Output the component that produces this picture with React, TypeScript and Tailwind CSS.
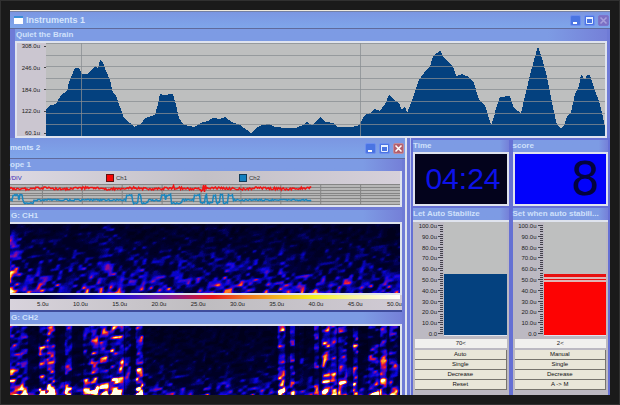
import type { ReactNode } from 'react';
import clsx from 'clsx';

type Point = [number, number];

const BRAIN: Point[] = [
  [46, 109], [51, 104], [56, 104], [61, 95], [67, 90], [69, 82], [72, 75], [75, 67], [79, 68], [82, 74],
  [87, 73], [92, 70], [95, 66], [98, 67], [100, 60], [103, 62], [106, 70], [110, 80], [113, 93], [116, 94],
  [120, 107], [124, 118], [130, 122], [134, 127], [141, 124], [145, 117], [155, 115], [158, 104], [160, 93],
  [163, 95], [173, 94], [176, 104], [179, 118], [184, 125], [194, 126], [203, 122], [208, 121], [213, 117],
  [220, 119], [225, 117], [232, 121], [240, 125], [247, 130], [251, 133], [256, 128], [262, 125], [269, 123],
  [275, 127], [286, 128], [296, 127], [303, 125], [307, 122], [312, 124], [321, 117], [325, 122], [334, 122],
  [337, 127], [350, 127], [358, 125], [362, 120], [365, 115], [370, 112], [375, 109], [380, 111], [385, 103],
  [389, 95], [393, 99], [399, 102], [402, 110], [405, 106], [407, 112], [413, 98], [419, 80], [426, 69],
  [430, 67], [433, 56], [437, 52], [440, 50], [444, 58], [449, 62], [453, 66], [456, 76], [462, 73],
  [469, 77], [474, 83], [479, 99], [485, 105], [488, 115], [491, 124], [494, 117], [496, 108], [500, 96],
  [510, 96], [514, 108], [521, 112], [526, 92], [530, 75], [534, 59], [538, 46], [541, 55], [546, 72],
  [550, 92], [553, 108], [557, 124], [561, 128], [564, 125], [567, 116], [571, 112], [575, 94], [579, 85],
  [581, 74], [585, 80], [587, 74], [590, 75], [594, 88], [599, 100], [602, 113], [605, 127],
];

const hash = (x: number, y: number, seed: number) => {
  const n = Math.sin(x * 127.1 + y * 311.7 + seed * 74.7) * 43758.5453;
  return n - Math.floor(n);
};

const smooth = (t: number) => t * t * (3 - 2 * t);

const noise = (x: number, y: number, seed: number) => {
  const xi = Math.floor(x);
  const yi = Math.floor(y);
  const fx = smooth(x - xi);
  const fy = smooth(y - yi);
  const top = hash(xi, yi, seed) * (1 - fx) + hash(xi + 1, yi, seed) * fx;
  const bottom = hash(xi, yi + 1, seed) * (1 - fx) + hash(xi + 1, yi + 1, seed) * fx;
  return top * (1 - fy) + bottom * fy;
};

const HEAT: [number, number, number, number][] = [
  [0, 0, 0, 28],
  [0.12, 0, 0, 60],
  [0.36, 10, 5, 225],
  [0.52, 110, 10, 170],
  [0.62, 235, 20, 50],
  [0.76, 250, 140, 30],
  [0.88, 255, 235, 90],
  [1, 255, 255, 235],
];

const LEVELS = 32;

const heatColor = (t: number) => {
  const i = Math.max(1, HEAT.findIndex((stop) => stop[0] >= t));
  const a = HEAT[i - 1];
  const b = HEAT[i];
  const f = (t - a[0]) / (b[0] - a[0]);
  const mix = (k: number) => Math.round(a[k] + (b[k] - a[k]) * f);
  return `rgb(${mix(1)},${mix(2)},${mix(3)})`;
};

// center, half width, strength over the full height, strength near the bottom
const BANDS: [number, number, number, number][] = [
  [4, 7, 0.36, 0.9], [13, 5, 0.27, 0.85], [32, 4, 0.4, 1], [40, 5, 0.43, 1.1], [58, 4, 0.3, 0.8],
  [77, 5, 0.31, 0.9], [84, 5, 0.4, 1.1], [94, 6, 0.38, 1.1], [104, 6, 0.45, 1.1], [110, 4, 0.42, 0.8],
  [117, 4, 0.24, 0.4], [129, 4, 0.48, 1], [272, 4, 0.48, 1.1], [283, 3, 0.26, 0.45], [292, 3, 0.17, 0.17],
  [307, 3, 0.26, 0.7], [317, 5, 0.45, 1.1], [324, 4, 0.32, 1.1], [333, 5, 0.38, 1.15], [346, 3, 0.4, 0.8],
  [364, 6, 0.27, 0.75], [374, 4, 0.4, 0.85], [384, 5, 0.26, 0.7],
];

const quietLevel = (x: number, y: number) => {
  const left = Math.max(0, 1 - x / 16) * 0.2;
  const faint = Math.exp(-(((x - 98) / 8) ** 2)) * 0.12;
  const depth = y * (x < 280 ? 0.2 : 0.17) + y ** 4 * 0.12;
  return 0.06 + left + faint * (1 - y) + depth;
};

const burstLevel = (x: number, y: number) => {
  let gain = 0;
  for (const [center, width, body, foot] of BANDS) {
    const shape = Math.exp(-(((x - center) / width) ** 4));
    gain = Math.max(gain, shape * (body * (0.9 + y * 0.3) + (foot * 1.1 - body) * y ** 7));
  }
  return Math.max(gain, 0.05 + y * 0.09 + y ** 6 * 0.24);
};

const spectrum = (width: number, height: number, seed: number, level: (x: number, y: number) => number) => {
  const paths: string[] = Array(LEVELS).fill('');
  for (let y = 0; y < height; y++) {
    let start = 0;
    let last = -1;
    for (let x = 0; x <= width; x++) {
      let q = -1;
      if (x < width) {
        const n = noise(x / 4.5 + y / 17, y / 3.2 + x / 23, seed) * 0.8 + noise(x / 8, y / 5, seed + 9) * 0.2;
        const v = level(x, y / height) * (0.2 + n * n * 2.5);
        q = Math.min(LEVELS - 1, Math.floor(v * LEVELS));
      }
      if (q !== last) {
        if (last >= 0) paths[last] += `M${start} ${y}h${x - start}v1h${start - x}z`;
        start = x;
        last = q;
      }
    }
  }
  return paths;
};

const CH1 = spectrum(391, 69, 3, quietLevel);
const CH2 = spectrum(391, 69, 17, burstLevel);

const redTrace = Array.from({ length: 303 }, (_, x) => {
  const burst = x > 162 && x < 167 ? 9 : x > 191 && x < 197 ? 9 : 2.4;
  return `${x},${(4.5 + (hash(x, 1, 5) - 0.5) * burst + Math.sin(x / 7) * 0.5).toFixed(1)}`;
}).join(' ');

const PULSES: [number, number][] = [
  [3, 8], [10, 12], [117, 122], [129, 131], [152, 155], [157, 161], [185, 190], [196, 197], [204, 206], [211, 213], [219, 223],
];

const blueTrace = Array.from({ length: 303 }, (_, x) => {
  const high = PULSES.some(([a, b]) => x >= a && x <= b);
  const low = (x > 13 && x < 24) || (x > 123 && x < 139) || (x > 161 && x < 173) || (x > 190 && x < 224);
  const base = high ? 11 : low ? 19 : 16;
  return `${x},${(base + (hash(x, 2, 8) - 0.5) * 1.6).toFixed(1)}`;
}).join(' ');

function Spectrogram({ paths, label }: { paths: string[]; label: string }) {
  return (
    <svg
      viewBox="0 0 391 69"
      preserveAspectRatio="none"
      shapeRendering="crispEdges"
      role="img"
      aria-label={label}
      className="block h-[69px] w-full bg-[#00001c]"
    >
      {paths.map((d, i) => (
        <path key={i} d={d} fill={heatColor(i / (LEVELS - 1))} />
      ))}
    </svg>
  );
}

function PanelTitle({ children, className }: { children: ReactNode; className?: string }) {
  return (
    <h2
      className={clsx(
        'h-3 whitespace-nowrap bg-linear-to-r from-[#7d9be4] from-90% to-[#7580d8] text-[8px] leading-3 font-bold text-[#cfe0fb]',
        className
      )}
    >
      {children}
    </h2>
  );
}

function WindowButtons({ disabled }: { disabled?: boolean }) {
  const base = 'flex size-[11px] items-center justify-center rounded-xs border';
  return (
    <div className="flex gap-[3px]">
      <button aria-label="Minimize" className={clsx(base, 'border-[#6c8df0] bg-[#4a74e2]')}>
        <svg viewBox="0 0 9 9" className="size-[9px] shrink-0">
          <path d="M2 6h4v2H2z" fill="#fff" />
        </svg>
      </button>
      <button aria-label="Maximize" className={clsx(base, 'border-[#6c8df0] bg-[#4a74e2]')}>
        <svg viewBox="0 0 9 9" className="size-[9px] shrink-0">
          <path d="M1.5 2h6v5.5h-6z" fill="none" stroke="#e8f0ff" />
          <path d="M1 1h7v2H1z" fill="#e8f0ff" />
        </svg>
      </button>
      <button
        aria-label="Close"
        disabled={disabled}
        className={clsx(base, disabled ? 'border-[#7d74cc] bg-[#7b70c4]' : 'border-[#c08a9c] bg-[#b35f6c]')}
      >
        <svg viewBox="0 0 9 9" className="size-[9px] shrink-0">
          <path d="M1.5 1.5l6 6M7.5 1.5l-6 6" stroke={disabled ? '#a8a0dc' : '#fff'} strokeWidth="1.5" />
        </svg>
      </button>
    </div>
  );
}

function BrainChart() {
  const line = BRAIN.map(([x, y], i) => {
    const wobble = i % 3 === 1 ? 1 : 0;
    return `${x - 46},${y - 43 + wobble}`;
  }).join(' ');
  return (
    <div className="flex border-2 border-[#dfe3ee] bg-[#cbc6d0]">
      <div className="flex w-[29px] flex-col justify-between text-right text-[6px] leading-[6px] text-[#222]">
        {['308.0u', '246.0u', '184.0u', '122.0u', '60.1u'].map((tick) => (
          <div key={tick} className="flex items-center justify-end gap-1">
            <span>{tick}</span>
            <span className="h-px w-[2px] bg-[#444]" />
          </div>
        ))}
      </div>
      <svg viewBox="0 0 559 93" preserveAspectRatio="none" role="img" aria-label="Quiet the Brain" className="block h-[93px] min-w-0 flex-1 bg-[#bebfbf]">
        <polygon points={`0,93 ${line} 559,93`} fill="#04417f" shapeRendering="crispEdges" />
        <g stroke="#888e92" strokeOpacity="0.75" shapeRendering="crispEdges">
          {[0.5, 12.5, 23.5, 35.5, 46.5, 58.5, 70.5, 81.5].map((y) => (
            <line key={y} x1="0" x2="559" y1={y} y2={y} />
          ))}
          <line x1="35.5" x2="35.5" y1="0" y2="93" />
          <line x1="314.5" x2="314.5" y1="0" y2="93" />
        </g>
      </svg>
    </div>
  );
}

function Scope() {
  return (
    <section className="border-r-2 border-b-2 border-[#dfe3ee]">
      <div className="grid h-[13px] grid-cols-[96px_133px_1fr] items-center bg-linear-to-r from-[#dcd8e2] via-[#c3c0c6] to-[#d6d0da] text-[6px] leading-[8px] text-[#333]">
        <span className="text-[#3427b4]">/DIV</span>
        <span className="flex items-center gap-[2px]">
          <span className="size-[8px] border border-[#601010] bg-[#f60606]" />
          Ch1
        </span>
        <span className="flex items-center gap-[2px]">
          <span className="size-[8px] border border-[#123c58] bg-[#1581c0]" />
          Ch2
        </span>
      </div>
      <svg viewBox="0 0 391 21" preserveAspectRatio="none" role="img" aria-label="Oscilloscope" className="block h-[21px] w-full bg-[#b6b6b6]">
        <g stroke="#858585" shapeRendering="crispEdges">
          {[0.5, 3.5, 6.5, 9.5, 11.5, 14.5, 17.5, 20.5].map((y) => (
            <line key={y} x1="0" x2="391" y1={y} y2={y} />
          ))}
          {[32.5, 72.5, 112.5, 152.5, 191.5, 231.5, 271.5, 311.5, 351.5].map((x) => (
            <line key={x} x1={x} x2={x} y1="0" y2="21" />
          ))}
        </g>
        <polyline points={redTrace} fill="none" stroke="#f01414" strokeWidth="1.5" />
        <polyline points={blueTrace} fill="none" stroke="#1b86be" strokeWidth="1.5" />
      </svg>
    </section>
  );
}

function ColorScale() {
  const ticks = ['5.0u', '10.0u', '15.0u', '20.0u', '25.0u', '30.0u', '35.0u', '40.0u', '45.0u', '50.0u'];
  return (
    <div className="bg-linear-to-r from-[#d8d3dc] via-[#bfbdc0] to-[#d0cad4]">
      <div className="mr-[2px] h-1 bg-[linear-gradient(to_right,#00001c_0%,#00002c_8%,#1010e0_26%,#7818a0_40%,#e81818_52%,#f07020_60%,#f0b020_68%,#f4f020_78%,#f8f4a0_88%,#ffffff_100%)]" />
      <div className="flex justify-between pl-[27px] text-[6px] leading-[11px] text-[#222]">
        {ticks.map((tick) => (
          <span key={tick}>{tick}</span>
        ))}
      </div>
    </div>
  );
}

interface LevelPanelProps {
  title: string;
  value: string;
  actions: string[];
  alert?: boolean;
}

function LevelPanel({ title, value, actions, alert }: LevelPanelProps) {
  return (
    <section className="flex min-w-0 flex-1 flex-col border-x-2 border-t-2 border-[#6570d4]">
      <PanelTitle>{title}</PanelTitle>
      <div className="flex-1 border-t-2 border-[#dfe3ee] bg-[#bcb9c2] px-[2px]">
        <div className="flex">
          <div className="flex h-[115px] w-[22px] flex-col justify-between pt-px text-right text-[6px] leading-[6px] text-[#222]">
            {[100, 90, 80, 70, 60, 50, 40, 30, 20, 10, 0].map((n) => (
              <span key={n}>{n ? `${n}.0u` : '0.0'}</span>
            ))}
          </div>
          <svg viewBox="0 0 5 115" className="mr-px ml-px h-[115px] w-[5px] shrink-0" shapeRendering="crispEdges">
            {Array.from({ length: 51 }, (_, i) => (
              <line key={i} x1={i % 5 ? 2 : 0} x2="5" y1={3.5 + i * 2.16} y2={3.5 + i * 2.16} stroke="#44424c" />
            ))}
          </svg>
          <div className="flex h-[114px] flex-1 flex-col justify-end border-b border-[#dfe3ee] bg-[#bebfbf]">
            {alert ? (
              <>
                <div className="h-[3px] bg-[#e81010]" />
                <div className="h-[2px] bg-[#e0b4b4]" />
                <div className="h-px bg-[#e81010]" />
                <div className="h-[2px] bg-[#e0b4b4]" />
                <div className="h-[53px] bg-[#fd0303]" />
              </>
            ) : (
              <div className="h-[61px] bg-[#04417f]" />
            )}
          </div>
        </div>
        <input
          aria-label={`${title} value`}
          defaultValue={value}
          className="mt-[2px] block h-[9px] w-full bg-[#f1f0ee] text-center text-[6px] leading-[9px] text-[#222] outline-none"
        />
        <div className="mt-[2px] flex flex-col">
          {actions.map((action) => (
            <button
              key={action}
              className="h-[10px] border-r border-b border-[#77756e] bg-[#e9e7d9] text-[6px] leading-[9px] text-[#111]"
            >
              {action}
            </button>
          ))}
        </div>
      </div>
    </section>
  );
}

function Readout({ title, children, className }: { title: string; children: ReactNode; className: string }) {
  return (
    <section className="min-w-0 flex-1 border-x-2 border-t-2 border-[#6570d4]">
      <PanelTitle>{title}</PanelTitle>
      <div className={clsx('flex h-[54px] items-center justify-end border-2 border-[#dfe3ee] leading-none', className)}>
        {children}
      </div>
    </section>
  );
}

export default function App() {
  return (
    <div className="min-h-screen border border-[#303030] bg-[#1a1a1a] p-[9px] font-['Liberation_Sans',Arial,sans-serif]">
      <main className="border-t border-[#efe9dc] bg-[#6f7bd6]">
        <header className="flex h-[17px] items-center justify-between border-t border-[#7480a4] bg-linear-to-b from-[#7b96e2] to-[#7fa6ea] pr-px pl-1">
          <h1 className="flex items-center gap-[3px] text-[9px] leading-3 font-bold text-[#d5e5fc]">
            <span className="h-[8px] w-[9px] border-t-2 border-[#3a8fd8] bg-white" />
            Instruments 1
          </h1>
          <WindowButtons disabled />
        </header>

        <section className="border-t border-[#5f6a9c] pr-[3px] pl-[5px]">
          <PanelTitle className="pl-px">Quiet the Brain</PanelTitle>
          <BrainChart />
        </section>

        <div className="flex">
          <div className="min-w-0 flex-1 border-r-2 border-[#dfe3ee]">
            <header className="flex h-5 items-center justify-between bg-linear-to-b from-[#7b96e2] to-[#7fa6ea] pr-px">
              <h1 className="text-[8px] leading-3 font-bold text-[#d5e5fc]">ments 2</h1>
              <WindowButtons />
            </header>
            <div className="border-t border-[#5f6a9c] pr-[3px]">
              <PanelTitle>ope 1</PanelTitle>
              <Scope />
              <PanelTitle className="mt-[3px] pl-px">G: CH1</PanelTitle>
              <div className="border-y-2 border-r-2 border-[#dfe3ee]">
                <Spectrogram paths={CH1} label="CH1 spectrum" />
              </div>
              <ColorScale />
              <PanelTitle className="box-content border-t-2 border-[#3f4c9c] pl-px">G: CH2</PanelTitle>
              <div className="border-t-2 border-r-2 border-[#dfe3ee]">
                <Spectrogram paths={CH2} label="CH2 spectrum" />
              </div>
            </div>
          </div>

          <div className="ml-[3px] flex w-[200px] flex-col border-l border-[#b9c3ee] bg-[#6570d4]">
            <div className="flex">
              <Readout title="Time" className="bg-[#03031c] pr-[6px] text-[30px] text-[#0d12ea]">
                04:24
              </Readout>
              <Readout title="score" className="bg-[#0202fb] pr-[6px] font-['DejaVu_Sans',sans-serif] text-[46px] text-[#03033c]">
                8
              </Readout>
            </div>
            <div className="flex flex-1">
              <LevelPanel title="Let Auto Stabilize" value="70<" actions={['Auto', 'Single', 'Decrease', 'Reset']} />
              <LevelPanel title="Set when auto stabili..." value="2<" actions={['Manual', 'Single', 'Decrease', 'A -> M']} alert />
            </div>
          </div>
        </div>
      </main>
    </div>
  );
}
